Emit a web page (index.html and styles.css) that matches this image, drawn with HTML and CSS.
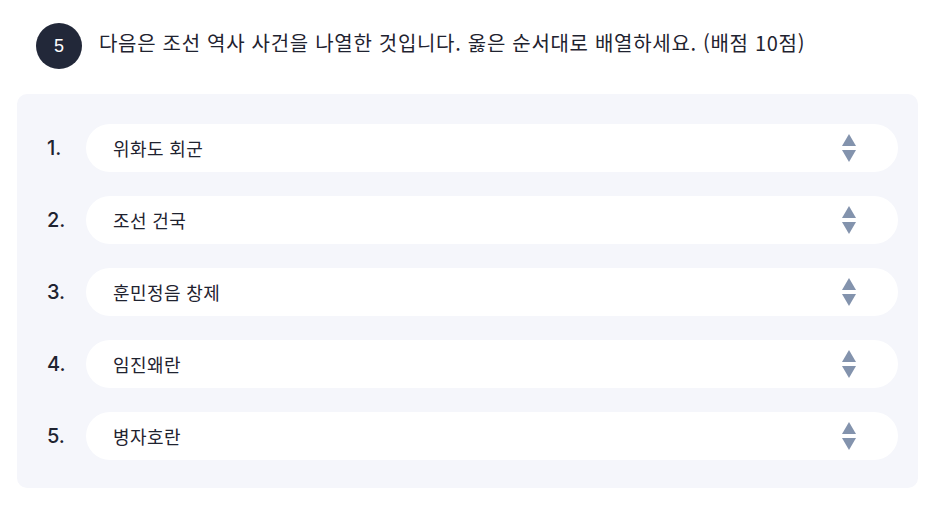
FILE: index.html
```html
<!DOCTYPE html>
<html lang="ko">
<head>
<meta charset="utf-8">
<link rel="stylesheet" href="styles.css">
</head>
<body>
<div class="question">
  <div class="q-head">
    <span class="q-badge">5</span>
    <span class="q-title">다음은 조선 역사 사건을 나열한 것입니다. 옳은 순서대로 배열하세요. (배점 10점)</span>
  </div>
  <div class="q-panel">
    <div class="row"><span class="num">1.</span><div class="sel"><span>위화도 회군</span><svg class="arrows" width="14" height="28" viewBox="0 0 14 28"><path d="M7 0 L14 12 L0 12 Z" fill="#8393ad"/><path d="M0 16 L14 16 L7 28 Z" fill="#8393ad"/></svg></div></div>
    <div class="row"><span class="num">2.</span><div class="sel"><span>조선 건국</span><svg class="arrows" width="14" height="28" viewBox="0 0 14 28"><path d="M7 0 L14 12 L0 12 Z" fill="#8393ad"/><path d="M0 16 L14 16 L7 28 Z" fill="#8393ad"/></svg></div></div>
    <div class="row"><span class="num">3.</span><div class="sel"><span>훈민정음 창제</span><svg class="arrows" width="14" height="28" viewBox="0 0 14 28"><path d="M7 0 L14 12 L0 12 Z" fill="#8393ad"/><path d="M0 16 L14 16 L7 28 Z" fill="#8393ad"/></svg></div></div>
    <div class="row"><span class="num">4.</span><div class="sel"><span>임진왜란</span><svg class="arrows" width="14" height="28" viewBox="0 0 14 28"><path d="M7 0 L14 12 L0 12 Z" fill="#8393ad"/><path d="M0 16 L14 16 L7 28 Z" fill="#8393ad"/></svg></div></div>
    <div class="row"><span class="num">5.</span><div class="sel"><span>병자호란</span><svg class="arrows" width="14" height="28" viewBox="0 0 14 28"><path d="M7 0 L14 12 L0 12 Z" fill="#8393ad"/><path d="M0 16 L14 16 L7 28 Z" fill="#8393ad"/></svg></div></div>
  </div>
</div>
</body>
</html>
```

FILE: styles.css
```css
html, body {
  margin: 0;
  padding: 0;
  background: #ffffff;
}
body {
  font-family: "Noto Sans CJK KR", "Noto Sans", sans-serif;
  color: #1f2330;
}
.question {
  padding: 23px 18px 0 17px;
}
.q-head {
  display: flex;
  align-items: flex-start;
  gap: 17px;
  padding-left: 19px;
  height: 71px;
}
.q-badge {
  width: 46px;
  height: 46px;
  border-radius: 50%;
  background: #222839;
  color: #ffffff;
  font-family: "Liberation Sans", sans-serif;
  font-size: 18px;
  display: flex;
  align-items: center;
  justify-content: center;
  flex-shrink: 0;
}
.q-title {
  font-size: 20px;
  letter-spacing: 0.7px;
  line-height: 28px;
  margin-top: 6px;
  color: #1f2330;
}
.q-panel {
  background: #f5f6fb;
  border-radius: 10px;
  padding: 30px 20px 28px 30px;
  display: flex;
  flex-direction: column;
  gap: 24px;
}
.row {
  display: flex;
  align-items: center;
}
.num {
  width: 39px;
  font-family: "Inter", "Noto Sans", sans-serif;
  font-size: 20px;
  font-weight: 500;
  color: #1f2330;
}
.sel {
  flex: 1;
  height: 48px;
  background: #ffffff;
  border-radius: 24px;
  display: flex;
  align-items: center;
  justify-content: space-between;
  padding: 0 42px 0 27px;
  font-size: 18px;
  letter-spacing: 0.4px;
  color: #1f2330;
}
.arrows {
  display: block;
}
```
